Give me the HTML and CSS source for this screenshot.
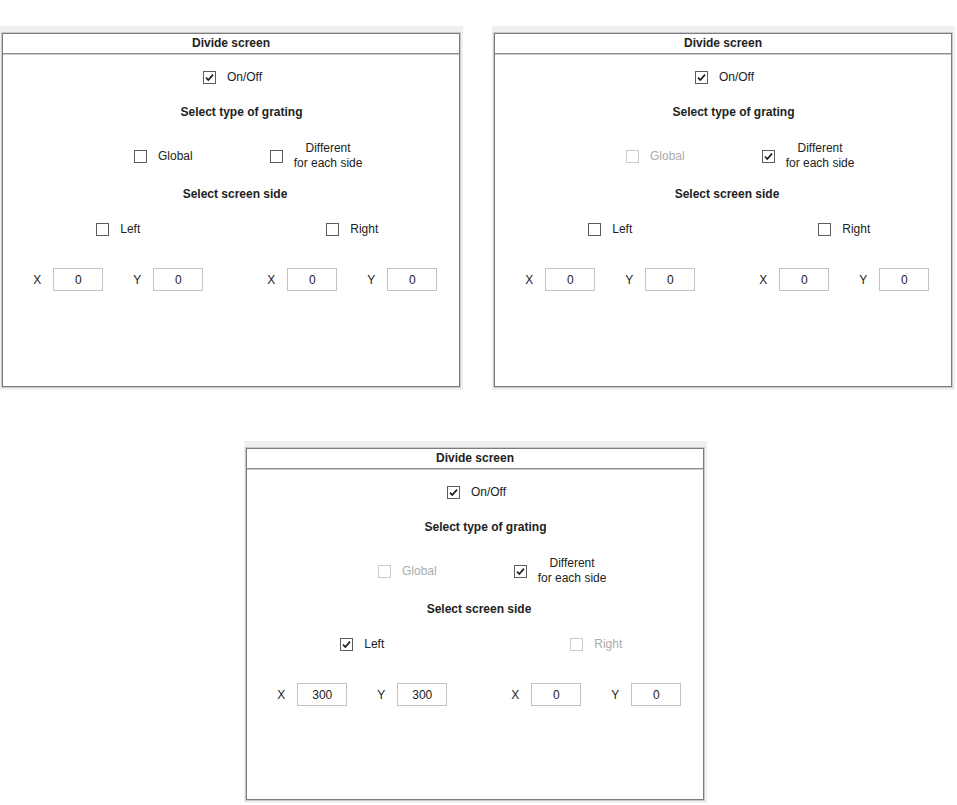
FILE: index.html
```html
<!DOCTYPE html>
<html lang="en">
<head>
<meta charset="utf-8">
<title>Divide screen</title>
<link rel="stylesheet" href="styles.css">
</head>
<body>
<div class="page">
  <div class="row-top">
    <section class="frame">
      <div class="panel">
        <div class="head">Divide screen</div>
        <div class="body">
          <label class="check onoff"><span class="cb"><svg viewBox="0 0 11 11"><polyline points="2,5.6 4.3,8 9,2.6"/></svg></span><span>On/Off</span></label>
          <div class="title title-grating">Select type of grating</div>
          <div class="grating">
            <label class="check"><span class="cb"></span><span>Global</span></label>
            <label class="check"><span class="cb"></span><span class="two">Different<br>for each side</span></label>
          </div>
          <div class="title title-side">Select screen side</div>
          <div class="sides">
            <div class="cell"><label class="check"><span class="cb"></span><span>Left</span></label></div>
            <div class="cell cell-right"><label class="check"><span class="cb"></span><span>Right</span></label></div>
          </div>
          <div class="coords">
            <div class="cell"><div class="xy"><div class="pair"><span class="axis">X</span><input class="num" value="0"></div><div class="pair"><span class="axis">Y</span><input class="num" value="0"></div></div></div>
            <div class="cell cell-right"><div class="xy"><div class="pair"><span class="axis">X</span><input class="num" value="0"></div><div class="pair"><span class="axis">Y</span><input class="num" value="0"></div></div></div>
          </div>
        </div>
      </div>
    </section>
    <section class="frame">
      <div class="panel">
        <div class="head">Divide screen</div>
        <div class="body">
          <label class="check onoff"><span class="cb"><svg viewBox="0 0 11 11"><polyline points="2,5.6 4.3,8 9,2.6"/></svg></span><span>On/Off</span></label>
          <div class="title title-grating">Select type of grating</div>
          <div class="grating">
            <label class="check is-off"><span class="cb"></span><span>Global</span></label>
            <label class="check"><span class="cb"><svg viewBox="0 0 11 11"><polyline points="2,5.6 4.3,8 9,2.6"/></svg></span><span class="two">Different<br>for each side</span></label>
          </div>
          <div class="title title-side">Select screen side</div>
          <div class="sides">
            <div class="cell"><label class="check"><span class="cb"></span><span>Left</span></label></div>
            <div class="cell cell-right"><label class="check"><span class="cb"></span><span>Right</span></label></div>
          </div>
          <div class="coords">
            <div class="cell"><div class="xy"><div class="pair"><span class="axis">X</span><input class="num" value="0"></div><div class="pair"><span class="axis">Y</span><input class="num" value="0"></div></div></div>
            <div class="cell cell-right"><div class="xy"><div class="pair"><span class="axis">X</span><input class="num" value="0"></div><div class="pair"><span class="axis">Y</span><input class="num" value="0"></div></div></div>
          </div>
        </div>
      </div>
    </section>
  </div>
  <div class="row-bottom">
    <section class="frame">
      <div class="panel panel-low">
        <div class="head">Divide screen</div>
        <div class="body">
          <label class="check onoff"><span class="cb"><svg viewBox="0 0 11 11"><polyline points="2,5.6 4.3,8 9,2.6"/></svg></span><span>On/Off</span></label>
          <div class="title title-grating">Select type of grating</div>
          <div class="grating">
            <label class="check is-off"><span class="cb"></span><span>Global</span></label>
            <label class="check"><span class="cb"><svg viewBox="0 0 11 11"><polyline points="2,5.6 4.3,8 9,2.6"/></svg></span><span class="two">Different<br>for each side</span></label>
          </div>
          <div class="title title-side">Select screen side</div>
          <div class="sides">
            <div class="cell"><label class="check"><span class="cb"><svg viewBox="0 0 11 11"><polyline points="2,5.6 4.3,8 9,2.6"/></svg></span><span>Left</span></label></div>
            <div class="cell cell-right"><label class="check is-off"><span class="cb"></span><span>Right</span></label></div>
          </div>
          <div class="coords">
            <div class="cell"><div class="xy"><div class="pair"><span class="axis">X</span><input class="num" value="300"></div><div class="pair"><span class="axis">Y</span><input class="num" value="300"></div></div></div>
            <div class="cell cell-right"><div class="xy"><div class="pair"><span class="axis">X</span><input class="num" value="0"></div><div class="pair"><span class="axis">Y</span><input class="num" value="0"></div></div></div>
          </div>
        </div>
      </div>
    </section>
  </div>
</div>
</body>
</html>
```
FILE: styles.css
```css
body {
  margin: 0;
  background: #ffffff;
  font-family: "Liberation Sans", Arial, sans-serif;
  font-size: 12px;
  color: #222222;
}

.page {
  padding-top: 26px;
}

.row-top {
  display: flex;
  gap: 29px;
}

.row-bottom {
  display: flex;
  padding-left: 244px;
  margin-top: 51px;
}

.frame {
  background: #f0f0f0;
  padding: 7px 3px 3px 2px;
}

.panel {
  width: 458px;
  height: 354px;
  box-sizing: border-box;
  background: #ffffff;
  border: 1px solid #7c7c7c;
  box-shadow: 0 0 0 1px #c9c9c9;
}

.panel-low {
  height: 352px;
}

.head {
  height: 19px;
  line-height: 19px;
  text-align: center;
  font-weight: bold;
  border-bottom: 1px solid #8c8c8c;
  box-shadow: 0 1px 0 #cdcdcd;
}

.body {
  display: flex;
  flex-direction: column;
  padding-left: 3px;
}

.check {
  display: flex;
  align-items: center;
  gap: 11px;
  line-height: 15px;
}

.cb {
  width: 13px;
  height: 13px;
  box-sizing: border-box;
  border: 1px solid #5c5c5c;
  background: #ffffff;
  display: flex;
  align-items: center;
  justify-content: center;
  flex: none;
}

.cb svg {
  width: 11px;
  height: 11px;
  fill: none;
  stroke: #1e1e1e;
  stroke-width: 1.7;
}

.check.is-off {
  color: #ababab;
}

.check.is-off .cb {
  border-color: #cacaca;
}

.two {
  text-align: center;
}

.onoff {
  align-self: center;
  margin-top: 16px;
}

.title {
  text-align: center;
  font-weight: bold;
  line-height: 15px;
}

.title-grating {
  margin-top: 20px;
  padding-left: 18px;
}

.title-side {
  margin-top: 16px;
  padding-left: 5px;
}

.grating {
  display: flex;
  align-items: center;
  gap: 77px;
  margin-top: 21px;
  padding-left: 128px;
}

.sides,
.coords {
  display: grid;
  grid-template-columns: 1fr 1fr;
}

.sides {
  margin-top: 20px;
}

.coords {
  margin-top: 31px;
}

.cell {
  display: flex;
  justify-content: center;
  padding-right: 2px;
}

.cell-right {
  padding-right: 0;
  padding-left: 13px;
}

.xy {
  display: flex;
  align-items: center;
  gap: 30px;
}

.pair {
  display: flex;
  align-items: center;
  gap: 12px;
}

.axis {
  width: 8px;
  text-align: center;
}

.num {
  width: 50px;
  height: 23px;
  box-sizing: border-box;
  margin: 0;
  padding: 0;
  border: 1px solid #c3c3c3;
  background: #ffffff;
  text-align: center;
  font-family: "Liberation Sans", Arial, sans-serif;
  font-size: 12px;
  color: #222222;
}
```
